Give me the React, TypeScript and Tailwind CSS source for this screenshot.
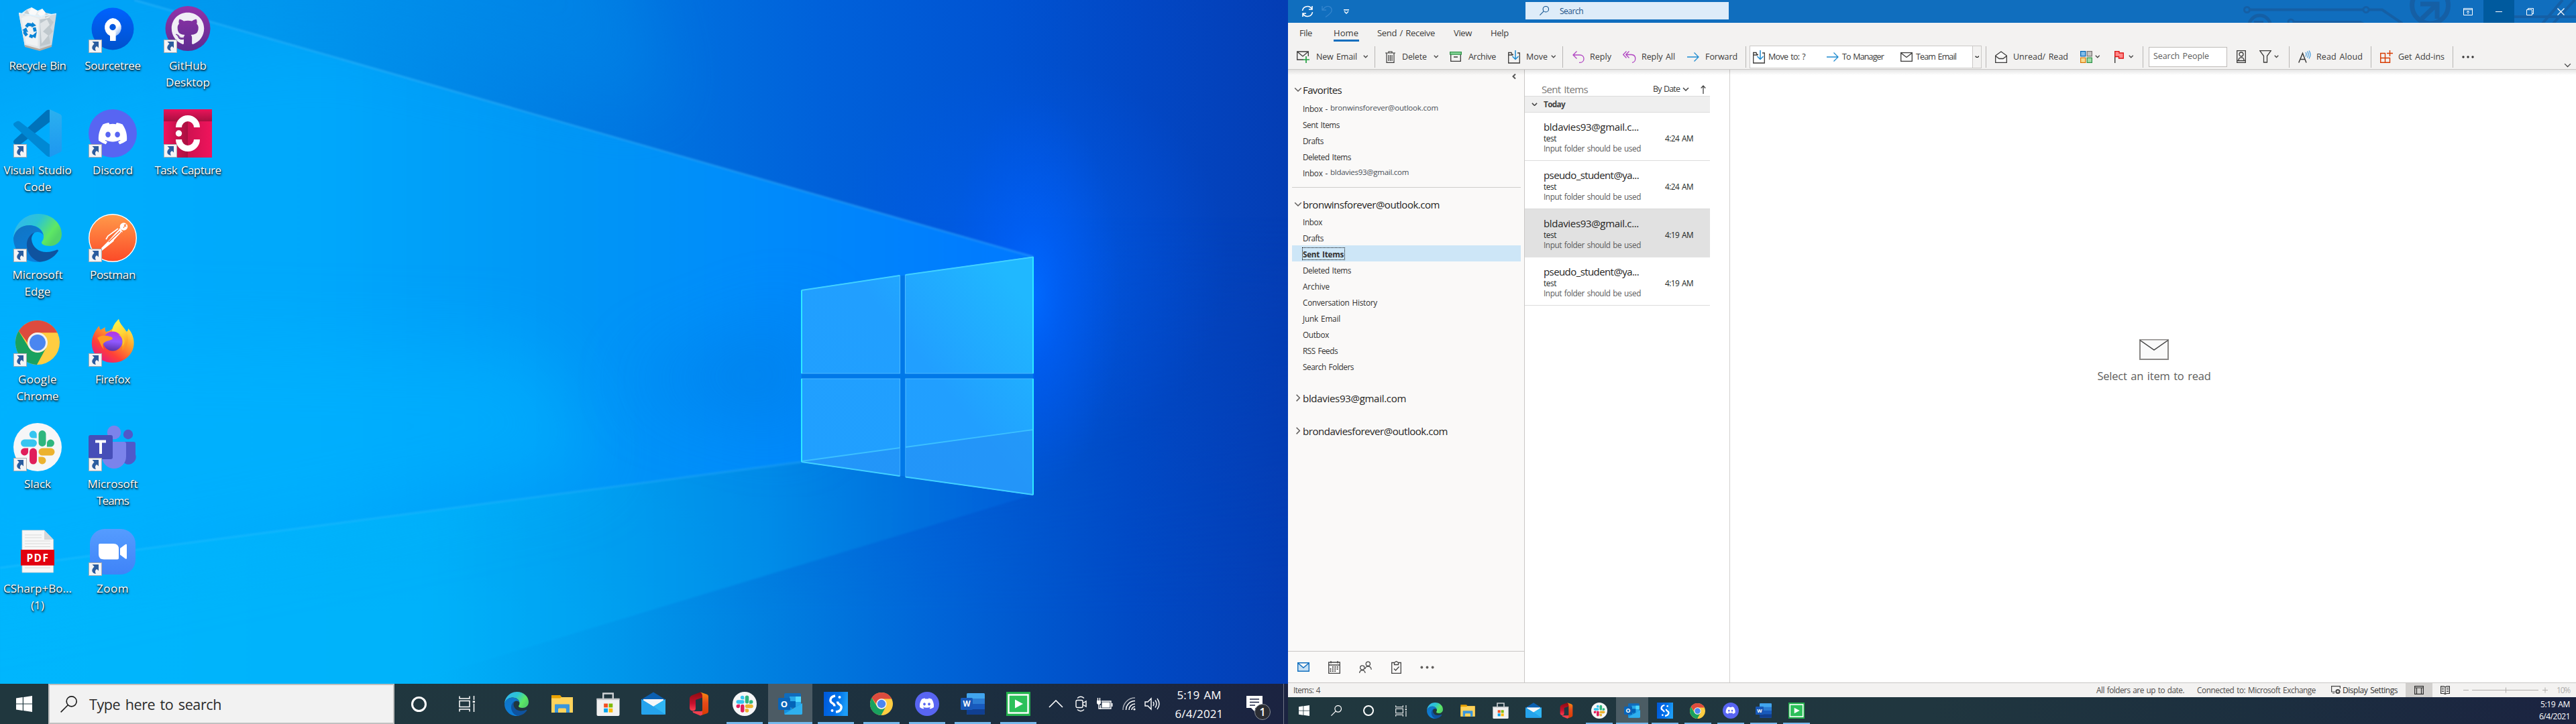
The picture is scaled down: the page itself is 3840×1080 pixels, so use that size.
import React, { useLayoutEffect, useRef, useState } from "react";
import { FaDiscord, FaGithub } from "react-icons/fa";

/* Single-line label whose tracking is adjusted so it spans `w` pixels. */
function Fit({ w, className = "", children }: { w: number; className?: string; children: string }) {
  const ref = useRef<HTMLSpanElement>(null);
  const [spacing, setSpacing] = useState(0);
  useLayoutEffect(() => {
    const el = ref.current;
    if (el) setSpacing((w - el.getBoundingClientRect().width) / Math.max(1, children.length));
  }, []);
  return (
    <span ref={ref} className={`inline-block shrink-0 whitespace-nowrap [word-spacing:0.1em] ${className}`} style={{ letterSpacing: `${spacing}px` }}>
      {children}
    </span>
  );
}

type IconProps = { s?: number };

/* ---------- App logos ---------- */

const RecycleBin = ({ s = 72 }: IconProps) => (
  <svg width={s} height={s} viewBox="0 0 72 72">
    <path d="M8 13 L39 17 L64 14 L57 62 L39 68 L17 62 Z" fill="#cfd8de" />
    <path d="M8 13 L39 17 L39 68 L17 62 Z" fill="#e4e8eb" />
    <path d="M12 20 L22 16 L38 20 L36 62 L19 58 Z" fill="#f1f3f4" />
    <path d="M40 22 L52 18 L60 26 L55 34 L59 40 L53 46 L55 58 L40 62 Z" fill="#bfc8cd" />
    <path d="M40 28 L50 22 L54 30 L44 40 L52 46 L42 58 Z" fill="#dfe4e7" />
    <path d="M13 12 L20 7 L27 4 L36 9 L43 6 L48 12 L57 14 L52 20 L40 22 L26 17 L14 18 Z" fill="#e9ecee" />
    <path d="M27 4 L36 9 L32 17 L22 14 Z M43 6 L48 12 L42 19 L36 13 Z" fill="#fafafa" />
    <path d="M20 7 L24 14 L14 16 Z M48 12 L55 16 L47 20 Z" fill="#c6cdd1" />
    <path d="M8 12.5 L39 17.5 L64 13.5" stroke="#dff3ff" strokeWidth="1.4" fill="none" />
    <path d="M17 60 L39 66 L57 60 L57 63 L39 69 L17 63 Z" fill="#b3aaa0" />
    <g fill="none" stroke="#0a84d6" strokeWidth="4.6">
      <path d="M19 33 L22 29.5 L29 30.5" />
      <path d="M31 34 L32.5 40" />
      <path d="M29 48 L24 46 M17.5 37 L17 42 L20 46" />
    </g>
    <path d="M28 26 L34 31 L27 34 Z M35 40 L33 50 L27 47 Z M13 38 L19 34 L22 41 Z" fill="#0a84d6" />
  </svg>
);

const Sourcetree = ({ s = 72 }: IconProps) => (
  <svg width={s} height={s} viewBox="0 0 72 72">
    <defs>
      <linearGradient id="stg" x1="0" y1="0" x2="0" y2="1"><stop offset="0" stopColor="#0062ff" /><stop offset="1" stopColor="#0052cc" /></linearGradient>
      <linearGradient id="stw" x1="0.3" y1="0" x2="1" y2="0.9"><stop offset="0.5" stopColor="#fff" /><stop offset="1" stopColor="#fff" stopOpacity="0.3" /></linearGradient>
    </defs>
    <circle cx="36" cy="36" r="31.5" fill="url(#stg)" />
    <path d="M36 20 a14 14 0 0 1 4.5 26.8 V54 h-8.500 V46.500 A14 14 0 0 1 36 20 Z" fill="url(#stw)" />
    <path d="M32 40 h8.500 v14 h-8.500 z" fill="#fff" />
    <circle cx="36" cy="33.500" r="4.700" fill="#0057e0" />
  </svg>
);

const GitHubDesktop = ({ s = 72 }: IconProps) => (
  <span className="relative flex size-[72px] items-center justify-center">
    <svg width={s} height={s} viewBox="0 0 72 72">
      <defs>
        <linearGradient id="ghg" x1="0" y1="0" x2="0" y2="1"><stop offset="0" stopColor="#9333a8" /><stop offset="1" stopColor="#5e2c91" /></linearGradient>
      </defs>
      <circle cx="36" cy="35.500" r="33.500" fill="url(#ghg)" />
    </svg>
    <FaGithub className="absolute left-[11px] top-[11px] size-[50px] text-[#f0eef5]" />
  </span>
);

const VsCode = ({ s = 72 }: IconProps) => (
  <svg width={s} height={s} viewBox="0 0 72 72">
    <defs><linearGradient id="vsr" x1="0" y1="0" x2="0" y2="1"><stop offset="0" stopColor="#2bb0ef" /><stop offset="1" stopColor="#1e97f0" /></linearGradient></defs>
    <path d="M1 46 Q-1 49 1 51 L5 54 Q7 55 9 53.500 L54 19 V1 Q52 0 49 2 Z" fill="#0072ba" />
    <path d="M1 25 Q-1 22 1 20.500 L5 18 Q7 17 9 18 L54 52.500 V71 Q52 71.500 49 69 Z" fill="#0088d4" />
    <path d="M54 0 L70 7.500 Q72 8.500 72 11 V61 Q72 63 70 64 L54 71.500 Z" fill="url(#vsr)" />
  </svg>
);

const DiscordLogo = ({ s = 72 }: IconProps) => (
  <span className="flex items-center justify-center rounded-full bg-[#5865f2]" style={{ width: s, height: s }}>
    <FaDiscord color="#fff" size={s * 0.64} />
  </span>
);

const TaskCapture = ({ s = 72 }: IconProps) => (
  <svg width={s} height={s} viewBox="0 0 72 72">
    <defs>
      <linearGradient id="tcg" x1="0" y1="0" x2="1" y2="0"><stop offset="0" stopColor="#f0145c" /><stop offset="0.5" stopColor="#a81040" /><stop offset="0.5" stopColor="#cf1150" /><stop offset="1" stopColor="#f0145c" /></linearGradient>
      <linearGradient id="tch" x1="0" y1="0" x2="0" y2="1"><stop offset="0" stopColor="#ea145a" /><stop offset="1" stopColor="#a80f40" /></linearGradient>
    </defs>
    <rect width="72" height="72" fill="url(#tcg)" />
    <rect width="72" height="18" fill="url(#tch)" />
    <path d="M22.500 27 A13.500 13.500 0 0 1 49.500 27 M22.500 45 A13.500 13.500 0 0 0 49.500 45" stroke="#fff" strokeWidth="9" fill="none" />
    <circle cx="22.500" cy="36" r="4.700" fill="#fff" />
  </svg>
);

const EdgeLogo = ({ s = 72 }: IconProps) => (
  <svg width={s} height={s} viewBox="0 0 72 72">
    <defs>
      <linearGradient id="eg1" x1="0" y1="0" x2="1" y2="0.500"><stop offset="0" stopColor="#33b4f5" /><stop offset="0.500" stopColor="#2cc4d4" /><stop offset="0.850" stopColor="#5ee864" /><stop offset="1" stopColor="#52d468" /></linearGradient>
      <linearGradient id="eg2" x1="0" y1="0" x2="0.500" y2="1"><stop offset="0" stopColor="#1173c2" /><stop offset="1" stopColor="#0b7fdc" /></linearGradient>
    </defs>
    <path d="M0 36 C1 14 18 0 37 0 C58 0 72 15 72 30 C72 42 63 48 54 48 C46 48 42 45 42 43 C42 41 45 40 45 34 C45 24 36 17 24 17 C11 17 3 26 0 36 Z" fill="url(#eg1)" />
    <path d="M0 36 C2 24 12 17 24 17 C36 17 45 26 45 34 C45 30 40 27 36 27 C28 27 22 36 22 46 C22 58 32 69 45 70.500 C42 71.500 39 72 36 72 C16 72 0 56 0 36 Z" fill="url(#eg2)" />
    <path d="M20 48 C19 38 25 30 32 27.500 C28 31 27 35 27 38 C28 50 38 57 49 57 C56 57 61 55 65 53.500 C66.500 53 67.500 54.500 66.500 56 C60 66 49 71.500 39 71.500 C28 69 21 59 20 48 Z" fill="#0f539f" />
  </svg>
);

const PostmanLogo = ({ s = 72 }: IconProps) => (
  <svg width={s} height={s} viewBox="0 0 72 72">
    <defs><linearGradient id="pmg" x1="0" y1="0" x2="0" y2="1"><stop offset="0" stopColor="#ff9a4a" /><stop offset="1" stopColor="#fc4a28" /></linearGradient></defs>
    <circle cx="36" cy="36" r="35.300" fill="url(#pmg)" stroke="#fff" strokeWidth="1.400" />
    <circle cx="52.500" cy="19" r="5.800" fill="#fff" />
    <path d="M53 16 l3 3 M52 21 l4 -6" stroke="#fb7a3c" strokeWidth="1.200" />
    <path d="M47 21 L51 27 L36 42 L20 55 L19 51 L31 39 Z" fill="#fff" />
    <path d="M45 23 L28 38 L26 37 M47 26 L30 42 M50 27 L38 40" stroke="#fb6a38" strokeWidth="1.300" fill="none" />
    <path d="M44 22 L29 33 L26 38" stroke="#fff" strokeWidth="1.800" fill="none" />
  </svg>
);

const ChromeLogo = ({ s = 72 }: IconProps) => (
  <svg width={s} height={s} viewBox="3 3 66 66">
    <circle cx="36" cy="36" r="33" fill="#ffcd41" />
    <path d="M36 3 A33 33 0 0 1 65.500 21.300 H36 A15 15 0 0 0 21 36 L7.900 18.700 A33 33 0 0 1 36 3 Z" fill="#dd4b3e" />
    <path d="M7.900 18.700 A33 33 0 0 0 35 69 L49 43.500 A15 15 0 0 1 23 43.500 Z" fill="#19a15f" />
    <circle cx="36" cy="36" r="15" fill="#f1f1f1" />
    <circle cx="36" cy="36" r="12" fill="#4a86f0" />
  </svg>
);

const FirefoxLogo = ({ s = 72 }: IconProps) => (
  <svg width={s} height={s} viewBox="0 0 72 72">
    <defs>
      <linearGradient id="ffg" x1="0.850" y1="0.100" x2="0.200" y2="1"><stop offset="0" stopColor="#fff44f" /><stop offset="0.350" stopColor="#ffa02c" /><stop offset="0.700" stopColor="#ff4038" /><stop offset="1" stopColor="#e31587" /></linearGradient>
      <linearGradient id="ffp" x1="0.500" y1="0" x2="0.400" y2="1"><stop offset="0" stopColor="#b833e1" /><stop offset="0.500" stopColor="#9059ff" /><stop offset="1" stopColor="#5b2fa8" /></linearGradient>
      <linearGradient id="ffy" x1="0.300" y1="0" x2="0.600" y2="1"><stop offset="0" stopColor="#fff44f" /><stop offset="0.500" stopColor="#ffd637" /><stop offset="1" stopColor="#ff8a1e" /></linearGradient>
    </defs>
    <path d="M5 40 C4 30 8 20 16 11 C16 14 17 16 18 17 C20 16 23 14 25 13 C24 16 25 18 26 20 C34 19 40 12 45 1 C46 8 52 12 56 19 C58 21 59 17 59 15 C65 21 68 30 67.500 38 C67 54 53 66 36 66 C20 66 6 55 5 40 Z" fill="url(#ffg)" />
    <path d="M35 20 C36 10 40 6 45 1 C46 9 55 14 58 25 C60 35 57 44 50 48 C52 36 48 26 35 20 Z" fill="url(#ffy)" />
    <circle cx="36" cy="34" r="14.500" fill="url(#ffp)" />
    <path d="M13 29 C18 25 24 25 28 26 C32 27 35 27 36 30 C34 33 28 33 25 35 C21 37 20 41 23 46 C18 42 17 34 13 29 Z" fill="#ff9a22" />
    <path d="M44 24 C50 27 53 34 50 42 C56 36 55 26 44 24 Z" fill="#ffc62e" />
  </svg>
);

const SlackLogo = ({ s = 72 }: IconProps) => (
  <svg width={s} height={s} viewBox="0 0 72 72">
    <circle cx="36" cy="36" r="36" fill="#f6f6f7" />
    <g transform="translate(36 36) scale(1.040) translate(-36 -36)">
      <path d="M29.500 12.500 a5.300 5.300 0 0 1 5.300 5.300 v5.300 h-5.300 a5.300 5.300 0 0 1 0 -10.600 Z" fill="#36c5f0" />
      <rect x="12" y="25" width="23" height="10.500" rx="5.250" fill="#36c5f0" />
      <rect x="37.500" y="12" width="10.500" height="23" rx="5.250" fill="#2eb67d" />
      <path d="M60 30.300 a5.300 5.300 0 0 1 -5.300 5.300 h-5.300 v-5.300 a5.300 5.300 0 0 1 10.600 0 Z" fill="#2eb67d" />
      <rect x="37.500" y="37.500" width="23" height="10.500" rx="5.250" fill="#ecb22e" />
      <path d="M42.700 60.500 a5.300 5.300 0 0 1 -5.300 -5.300 v-5.300 h5.300 a5.300 5.300 0 0 1 0 10.600 Z" fill="#ecb22e" />
      <rect x="24.500" y="37.500" width="10.500" height="23" rx="5.250" fill="#e01e5a" />
      <path d="M12 42.700 a5.300 5.300 0 0 1 5.300 -5.300 h5.300 v5.300 a5.300 5.300 0 0 1 -10.600 0 Z" fill="#e01e5a" />
    </g>
  </svg>
);

const TeamsLogo = ({ s = 72 }: IconProps) => (
  <svg width={s} height={s} viewBox="0 0 72 72">
    <circle cx="59" cy="17" r="7.200" fill="#5059c9" />
    <path d="M50 28 H67 Q70 28 70 31 V47 A11 11 0 0 1 50 56 Z" fill="#5059c9" />
    <circle cx="38" cy="14" r="10.300" fill="#7b83eb" />
    <path d="M20 28 H53 Q56 28 56 31 V50 A18 18 0 0 1 20 50 Z" fill="#7b83eb" />
    <rect x="0" y="18" width="36" height="36" rx="3" fill="#464eb8" />
    <path d="M10 27.500 H26 M18 27.500 V46" stroke="#fff" strokeWidth="4" />
  </svg>
);

const PdfFile = ({ s = 72 }: IconProps) => (
  <svg width={s} height={s} viewBox="0 0 72 72">
    <path d="M13 4 H46 L59.500 18 V67 H13 Z" fill="#f7f7f7" stroke="#d0d0d0" strokeWidth="0.800" />
    <path d="M46 4 L59.500 18 H46 Z" fill="#d4d6d8" />
    <path d="M17 11 H42 M17 15 H42 M17 20 H55 M17 24 H55 M17 28.500 H55 M17 60 H55" stroke="#d5d5d5" strokeWidth="0.900" />
    <rect x="11" y="33" width="50" height="23.500" fill="#e2000f" />
    <text x="36.500" y="50.500" fontFamily="Open Sans, sans-serif" fontWeight="700" fontSize="15.500" letterSpacing="1.500" textAnchor="middle" fill="#fff">PDF</text>
  </svg>
);

const ZoomLogo = ({ s = 72 }: IconProps) => (
  <svg width={s} height={s} viewBox="0 0 72 72">
    <defs><linearGradient id="zmg" x1="0" y1="0" x2="0" y2="1"><stop offset="0" stopColor="#559cff" /><stop offset="1" stopColor="#3f83f8" /></linearGradient></defs>
    <rect x="2" y="2" width="68" height="68" rx="22" fill="url(#zmg)" />
    <path d="M15 26 Q15 24 17 24 H37 Q45 24 45 32 V45.500 Q45 47.500 43 47.500 H23 Q15 47.500 15 40 Z" fill="#fff" />
    <path d="M47 31 L55 25 Q57 24 57 26 V45.500 Q57 47.500 55 46.500 L47 40.500 Z" fill="#fff" />
  </svg>
);

const Explorer = ({ s = 36 }: IconProps) => (
  <svg width={s} height={s} viewBox="0 0 36 36">
    <path d="M2 5 H15 L17.500 8 H34 V31 H2 Z" fill="#e9a100" />
    <path d="M2 9.500 H15 L17 8 H34 V31 H2 Z" fill="#ffd35c" />
    <path d="M7 19.500 Q7 18.500 8 18.500 H28 Q29 18.500 29 19.500 V31 H24 V26 Q24 24.500 22.500 24.500 H13.500 Q12 24.500 12 26 V31 H7 Z" fill="#3a96dd" />
  </svg>
);

const Store = ({ s = 36 }: IconProps) => (
  <svg width={s} height={s} viewBox="0 0 36 36">
    <path d="M10.500 10 V1.500 H25.500 V10" fill="none" stroke="#d0d3d6" strokeWidth="2.400" />
    <path d="M0.500 9.500 H35.500 V34 Q35.500 36 33.500 36 H2.500 Q0.500 36 0.500 34 Z" fill="#f1f1f1" />
    <rect x="0.500" y="9" width="35" height="2.500" fill="#c6c9cc" />
    <rect x="11.500" y="17" width="6" height="6" fill="#f25022" /><rect x="19" y="17" width="6" height="6" fill="#7fba00" />
    <rect x="11.500" y="24.500" width="6" height="6" fill="#00a4ef" /><rect x="19" y="24.500" width="6" height="6" fill="#ffb900" />
  </svg>
);

const MailApp = ({ s = 36 }: IconProps) => (
  <svg width={s} height={s} viewBox="0 0 36 36">
    <path d="M0 11.500 L18 0.500 L36 11.500 V14 H0 Z" fill="#0a5fb0" />
    <path d="M3 11 H33 V26 H3 Z" fill="#f4f6f8" />
    <path d="M0 11 L18 22 L36 11 V32 Q36 34 34 34 H2 Q0 34 0 32 Z" fill="#1a9be8" />
    <path d="M36 11 L18 22 L36 34 Z" fill="#30b6f4" />
    <path d="M0 11 L18 22 L35 34 H2 Q0 34 0 32 Z" fill="#25a3ec" />
  </svg>
);

const OfficeLogo = ({ s = 36 }: IconProps) => (
  <svg width={s} height={s} viewBox="0 0 36 36">
    <defs>
      <linearGradient id="ofg" x1="0" y1="0" x2="0" y2="1"><stop offset="0" stopColor="#f88a10" /><stop offset="0.450" stopColor="#e64a19" /><stop offset="1" stopColor="#d83b01" /></linearGradient>
      <linearGradient id="ofd" x1="0" y1="0" x2="0" y2="1"><stop offset="0" stopColor="#8a0d10" /><stop offset="0.600" stopColor="#c8102e" /><stop offset="1" stopColor="#ff4050" /></linearGradient>
    </defs>
    <path d="M20 0.500 L29 3.500 Q32 4.500 32 7 V29 Q32 31.500 29 32.500 L20 35.500 L10 30.500 Q20 31 23 28 V8 Z" fill="url(#ofg)" />
    <path d="M20 0.500 Q23 2 23 6 V8.500 L13 12 V25 Q13 28 9 28.500 Q4 28 4 24 V10 Q4 7 8 5 Z" fill="url(#ofd)" />
    <path d="M8.500 29 H23 V34 L20 35.500 L9 31 Z" fill="#ef4050" />
  </svg>
);

const OutlookLogo = ({ s = 36 }: IconProps) => (
  <svg width={s} height={s} viewBox="0 0 36 36">
    <rect x="9" y="2" width="25" height="22" rx="2" fill="#0f6cbd" />
    <rect x="17" y="7" width="17" height="16" fill="#28a8ea" />
    <rect x="26" y="7" width="8" height="8" fill="#50d9ff" /><rect x="17" y="14" width="9" height="9" fill="#0364b8" />
    <path d="M9 18 L22 25 L36 17 V32 Q36 34 34 34 H11 Q9 34 9 32 Z" fill="#1490df" />
    <path d="M36 17 L9 33 Q10 34 11 34 H34 Q36 34 36 32 Z" fill="#35b8f1" opacity="0.800" />
    <rect x="0" y="9" width="18" height="18" rx="1.500" fill="#0a64b8" />
    <text x="9" y="22.700" fontFamily="Open Sans, sans-serif" fontWeight="700" fontSize="13" textAnchor="middle" fill="#fff">O</text>
  </svg>
);

const StudioLogo = ({ s = 36 }: IconProps) => (
  <svg width={s} height={s} viewBox="0 0 36 36">
    <defs><linearGradient id="sug" x1="0" y1="0" x2="1" y2="0.200"><stop offset="0" stopColor="#0058d8" /><stop offset="0.600" stopColor="#0070ea" /><stop offset="1" stopColor="#1c9cf6" /></linearGradient></defs>
    <rect width="36" height="36" fill="url(#sug)" />
    <path d="M17 6 C9 7 8 14.500 13 17 C15.500 18.300 16 19.500 16 21.500" stroke="#fff" strokeWidth="3.400" fill="none" />
    <path d="M18 30 C27 29 28 21.500 23.500 19 C21 17.700 20.500 16.500 20.500 14.500" stroke="#fff" strokeWidth="3.400" fill="none" />
    <circle cx="23.500" cy="8" r="2" fill="#fff" /><circle cx="12.500" cy="28" r="2" fill="#fff" />
  </svg>
);

const WordLogo = ({ s = 36 }: IconProps) => (
  <svg width={s} height={s} viewBox="0 0 36 36">
    <rect x="9" y="2" width="27" height="32" rx="2" fill="#2b7cd3" />
    <path d="M9 4 Q9 2 11 2 H34 Q36 2 36 4 V10 H9 Z" fill="#41a5ee" />
    <rect x="9" y="18" width="27" height="8" fill="#185abd" />
    <path d="M9 26 H36 V32 Q36 34 34 34 H11 Q9 34 9 32 Z" fill="#103f91" />
    <rect x="0" y="9" width="18" height="18" rx="1.500" fill="#1858b8" />
    <text x="9" y="22.300" fontFamily="Open Sans, sans-serif" fontWeight="700" fontSize="11.500" textAnchor="middle" fill="#fff">W</text>
  </svg>
);

const RecorderLogo = ({ s = 36 }: IconProps) => (
  <svg width={s} height={s} viewBox="0 0 36 36">
    <rect width="36" height="36" fill="#22b14c" />
    <rect x="3.500" y="4.500" width="29" height="27" fill="#2cc05a" stroke="#fff" strokeWidth="2.400" />
    <path d="M13 11.500 L25 18 L13 24.500 Z" fill="#fff" />
  </svg>
);

const WindowsFlag = ({ s = 24 }: IconProps) => (
  <svg width={s} height={s} viewBox="0 0 24 24" fill="#fff">
    <path d="M0 3.400 L9.800 2.050 V11.500 H0 Z M11 1.900 L24 0 V11.500 H11 Z M0 12.600 H9.800 V22 L0 20.600 Z M11 12.600 H24 V24 L11 22.100 Z" />
  </svg>
);

const Lens = ({ s = 24, color = "#fff", w = 1.6 }: { s?: number; color?: string; w?: number }) => (
  <svg width={s} height={s} viewBox="0 0 24 24" fill="none" stroke={color} strokeWidth={w}>
    <circle cx="16" cy="8" r="7.200" /><path d="M10.800 13.200 L0.600 23.400" />
  </svg>
);

const TaskView = ({ s = 24 }: IconProps) => (
  <svg width={s} height={s} viewBox="0 0 24 24" fill="none" stroke="#fff" strokeWidth="1.500">
    <path d="M1 0.500 V4 H16 V0.500 M1 23.500 V20 H16 V23.500 M1 7.500 H16 V16.500 H1 Z M22.500 0 V6 M22.500 11.500 V24" />
    <rect x="20.700" y="7.500" width="3.300" height="2.600" fill="#fff" stroke="none" />
  </svg>
);

/* ---------- Wallpaper ---------- */

const Wallpaper = () => (
  <svg className="absolute inset-0" width="1920" height="1080" viewBox="0 0 1920 1080">
    <defs>
      <linearGradient id="wtop" x1="0" y1="0" x2="1" y2="0">
        <stop offset="0" stopColor="#00a5f6" /><stop offset="0.210" stopColor="#0099ef" /><stop offset="0.450" stopColor="#007ae2" />
        <stop offset="0.640" stopColor="#0061da" /><stop offset="0.780" stopColor="#0053d2" /><stop offset="0.890" stopColor="#0247c4" /><stop offset="1" stopColor="#043db4" />
      </linearGradient>
      <linearGradient id="wbot" x1="0" y1="0" x2="1" y2="0">
        <stop offset="0" stopColor="#00b4fb" /><stop offset="0.340" stopColor="#00b1f9" /><stop offset="0.470" stopColor="#0099ec" />
        <stop offset="0.600" stopColor="#007fe0" /><stop offset="0.730" stopColor="#0064d7" /><stop offset="0.880" stopColor="#004ac5" /><stop offset="1" stopColor="#043db4" />
      </linearGradient>
      <linearGradient id="wfade" x1="0" y1="0" x2="0" y2="1"><stop offset="0.300" stopColor="#000" /><stop offset="0.850" stopColor="#fff" /></linearGradient>
      <mask id="wmask"><rect width="1920" height="1080" fill="url(#wfade)" /></mask>
      <linearGradient id="wbeam" gradientUnits="userSpaceOnUse" x1="0" y1="0" x2="1540" y2="0">
        <stop offset="0" stopColor="#00aefd" /><stop offset="0.300" stopColor="#00a8fb" /><stop offset="0.550" stopColor="#0096f6" /><stop offset="0.720" stopColor="#008cfa" /><stop offset="1" stopColor="#0078ff" />
      </linearGradient>
      <linearGradient id="wlow" gradientUnits="userSpaceOnUse" x1="0" y1="0" x2="1540" y2="0">
        <stop offset="0" stopColor="#00b7fe" /><stop offset="0.400" stopColor="#00b3fb" /><stop offset="0.600" stopColor="#00a3f2" /><stop offset="0.740" stopColor="#0094ec" /><stop offset="0.850" stopColor="#007de2" /><stop offset="1" stopColor="#0060dc" />
      </linearGradient>
      <radialGradient id="wglow" gradientUnits="userSpaceOnUse" cx="0" cy="0" r="1" gradientTransform="translate(1540 440) scale(130 300)">
        <stop offset="0" stopColor="#006aff" stopOpacity="1" /><stop offset="0.350" stopColor="#0060fa" stopOpacity="0.600" /><stop offset="1" stopColor="#0058f0" stopOpacity="0" />
      </radialGradient>
      <radialGradient id="wglow2" gradientUnits="userSpaceOnUse" cx="1530" cy="390" r="300">
        <stop offset="0" stopColor="#0068ff" stopOpacity="0.550" /><stop offset="1" stopColor="#0058f0" stopOpacity="0" />
      </radialGradient>
      <linearGradient id="wpane" gradientUnits="userSpaceOnUse" x1="1195" y1="740" x2="1540" y2="460">
        <stop offset="0" stopColor="#20a0ff" /><stop offset="0.600" stopColor="#219fff" /><stop offset="1" stopColor="#20b8ff" />
      </linearGradient>
      <filter id="soft" x="-10%" y="-10%" width="120%" height="120%"><feGaussianBlur stdDeviation="1.500" /></filter>
      <filter id="wide" x="-40%" y="-60%" width="180%" height="220%"><feGaussianBlur stdDeviation="55" /></filter>
    </defs>
    <rect width="1920" height="1080" fill="url(#wtop)" />
    <rect width="1920" height="1080" fill="url(#wbot)" mask="url(#wmask)" />
    <rect x="1180" y="40" width="740" height="720" fill="url(#wglow2)" />
    <rect x="1300" y="100" width="600" height="700" fill="url(#wglow)" />
    <path d="M0 846 L1195 689 L1540 738 L700 992 L400 1080 H0 Z" fill="url(#wlow)" filter="url(#soft)" opacity="0.700" />
    <path d="M-60 -77 L200 0 L1540 383 V640 L1195 689 L0 847 L-60 860 Z" fill="url(#wbeam)" filter="url(#soft)" />
    <path d="M-100 -200 H900 L1000 170 L500 60 L200 90 L-100 200 Z" fill="#0092ec" opacity="0.350" filter="url(#wide)" />
    <path d="M-100 500 L800 520 L900 700 L-100 900 Z" fill="#00b4ff" opacity="0.600" filter="url(#wide)" />
    <path d="M940 570 L1200 470 V640 Z" fill="#0080e8" opacity="0.800" filter="url(#wide)" />
    <path d="M200 0 L1540 383" stroke="#4cc4ff" strokeWidth="2" opacity="0.500" filter="url(#soft)" />
    <path d="M0 847 L1195 689" stroke="#3cc8ff" strokeWidth="2" opacity="0.450" filter="url(#soft)" />
    <path d="M1195 433 L1540 383 V738 L1195 689 Z" fill="#0078e8" />
    <g fill="url(#wpane)" stroke="#4ab8ff" strokeWidth="1.200">
      <path d="M1195 433 L1341.500 411 V557 H1195 Z" />
      <path d="M1349.500 410 L1540 383.500 V557 H1349.500 Z" />
      <path d="M1195 565 H1341.500 V710 L1195 689 Z" />
      <path d="M1350 565 H1540 V738 L1350 711.500 Z" />
    </g>
    <path d="M1195 689 L1341.500 668 V710 Z M1350 667 L1540 641 V738 L1350 711.500 Z" fill="#2490f5" opacity="0.600" />
    <path d="M1195 688 L1341.500 668 M1350 667 L1540 641" stroke="#3cc0ff" strokeWidth="1.800" />
    <path d="M1195 433 V557 M1195 565 V689 M1540 383 V557 M1540 565 V738" stroke="#2eeaff" strokeWidth="2" />
    <path d="M1195 433 L1341 411 M1350 410 L1540 383.500 M1195 689 L1341 710 M1350 711.500 L1540 738" stroke="#40d0ff" strokeWidth="2" />
  </svg>
);

/* ---------- Desktop ---------- */

const ShortcutArrow = () => (
  <svg className="absolute bottom-0 left-0" width="20" height="20" viewBox="0 0 20 20">
    <rect x="0.500" y="0.500" width="19" height="19" fill="#f4f4f5" stroke="#a9adb2" />
    <path d="M5.500 3 H15 V12.500 L12.500 10 C9.500 11.500 9.500 14 11 17 C5 16 3 11.500 8.500 6.200 Z" fill="#2b5c9e" />
  </svg>
);

type App = { icon: React.FC<IconProps>; lines: [string, number][]; shortcut?: boolean };

const desktopColumns: App[][] = [
  [
    { icon: RecycleBin, lines: [["Recycle Bin", 85]], shortcut: false },
    { icon: VsCode, lines: [["Visual Studio", 101], ["Code", 41]] },
    { icon: EdgeLogo, lines: [["Microsoft", 75], ["Edge", 39]] },
    { icon: () => <span className="flex size-[72px] items-center justify-center"><ChromeLogo s={66} /></span>, lines: [["Google", 58], ["Chrome", 63]] },
    { icon: SlackLogo, lines: [["Slack", 40]] },
    { icon: PdfFile, lines: [["CSharp+Bo...", 102], ["(1)", 20]], shortcut: false },
  ],
  [
    { icon: Sourcetree, lines: [["Sourcetree", 83.5]] },
    { icon: DiscordLogo, lines: [["Discord", 60]] },
    { icon: PostmanLogo, lines: [["Postman", 68]] },
    { icon: FirefoxLogo, lines: [["Firefox", 52]] },
    { icon: TeamsLogo, lines: [["Microsoft", 75], ["Teams", 48]] },
    { icon: ZoomLogo, lines: [["Zoom", 48]] },
  ],
  [
    { icon: GitHubDesktop, lines: [["GitHub", 56], ["Desktop", 66]] },
    { icon: TaskCapture, lines: [["Task Capture", 99]] },
  ],
];

const DesktopIcon = ({ app }: { app: App }) => {
  const Icon = app.icon;
  return (
    <div className="flex h-[156px] w-28 flex-col items-center pt-[7px]">
      <div className="relative size-[72px]">
        <Icon s={72} />
        {app.shortcut !== false && <ShortcutArrow />}
      </div>
      <div className="mt-1.5 flex flex-col items-center text-[17px] leading-[25px] text-white [text-shadow:0_1px_2px_rgba(0,0,0,0.9),1px_2px_3px_rgba(0,0,0,0.7)]">
        {app.lines.map(([t, w]) => <Fit key={t} w={w}>{t}</Fit>)}
      </div>
    </div>
  );
};

/* ---------- Taskbars ---------- */

const pinned: { icon: React.FC<IconProps>; open?: boolean; active?: boolean }[] = [
  { icon: EdgeLogo }, { icon: Explorer }, { icon: Store }, { icon: MailApp }, { icon: OfficeLogo },
  { icon: SlackLogo, open: true }, { icon: OutlookLogo, open: true, active: true }, { icon: StudioLogo, open: true },
  { icon: ChromeLogo, open: true }, { icon: DiscordLogo, open: true }, { icon: WordLogo, open: true }, { icon: RecorderLogo, open: true },
];

const Pinned = ({ big }: { big: boolean }) => (
  <>
    {pinned.map(({ icon: Icon, open, active }, i) => (
      <div key={i} className={`flex h-full shrink-0 justify-center ${big ? "w-[68px]" : "w-[49px]"}`}>
        <div className={`relative flex h-full items-center justify-center ${active ? (big ? "w-[66px] bg-[#4c5b64]" : "w-12 bg-[#4b5c64]") : big ? "w-[54px]" : "w-10"}`}>
          <Icon s={big ? (Icon === ChromeLogo ? 34 : Icon === Store ? 35 : 36) : Icon === ChromeLogo ? 23 : 24} />
          {open && <span className={`absolute inset-x-0 bottom-0 bg-[#76b9ed] ${big ? "h-[3px]" : "h-0.5"}`} />}
        </div>
      </div>
    ))}
  </>
);

const Cell = ({ className, children }: { className: string; children: React.ReactNode }) => (
  <div className={`flex h-full shrink-0 items-center justify-center ${className}`}>{children}</div>
);

const MainTaskbar = () => (
  <div className="relative flex h-[60px] w-full items-center bg-[linear-gradient(90deg,#20373e_0%,#20363f_50%,#1c2f3f_75%,#1b2341_100%)] text-white">
    <Cell className="w-[72px]"><WindowsFlag s={24} /></Cell>
    <div className="flex h-full w-[516px] shrink-0 items-center border-2 border-[#c0c0c0] bg-[#f2f2f2] pl-[16px]">
      <Lens s={25} color="#1f1f1f" />
      <Fit w={197} className="ml-[18px] mt-0.5 text-[21.5px] text-[#2b2b2b]">Type here to search</Fit>
    </div>
    <Cell className="w-[72px]"><span className="size-[23px] rounded-full border-[3px] border-white" /></Cell>
    <Cell className="w-[72px]"><TaskView s={24} /></Cell>
    <div className="w-1 shrink-0" />
    <Pinned big />
    <Cell className="w-11">
      <svg width="22" height="12" viewBox="0 0 22 12" fill="none" stroke="#fff" strokeWidth="1.600"><path d="M1 11 L11 1 L21 11" /></svg>
    </Cell>
    <Cell className="w-[30px]">
      <svg width="17" height="24" viewBox="0 0 17 24" fill="none" stroke="#fff" strokeWidth="1.400"><rect x="1" y="6.500" width="10" height="11" rx="2" /><path d="M11 11 L16 8 V16 L11 13 M3 3.500 Q8 -1 13 3.500 M3 20.500 Q8 25 13 20.500" /></svg>
    </Cell>
    <Cell className="w-10">
      <svg width="25" height="18" viewBox="0 0 25 18" fill="none" stroke="#fff" strokeWidth="1.400"><path d="M8 5 H22 V16 H6.500 V11" /><path d="M8.500 6.500 H20.500 V14.500 H8.500 Z M23 8 h1.500 v5 h-1.500 z M1 4 h6 v3 q0 3 -3 3 q-3 0 -3 -3 z" fill="#fff" stroke="none" /><path d="M2.500 0 V4 M5.500 0 V4 M4 9 V16 H7" /></svg>
    </Cell>
    <Cell className="w-[34px]">
      <svg width="20" height="20" viewBox="0 0 20 20" fill="none" stroke="#fff" strokeWidth="1.500"><path d="M1 19 A18 18 0 0 1 19 1" opacity="0.600" /><path d="M5.500 19 A13.500 13.500 0 0 1 19 5.500 M10 19 A9 9 0 0 1 19 10 M14 19 A5 5 0 0 1 19 14" /><circle cx="18" cy="18" r="1.600" fill="#fff" stroke="none" /></svg>
    </Cell>
    <Cell className="w-9">
      <svg width="24" height="20" viewBox="0 0 24 20" fill="none" stroke="#fff" strokeWidth="1.400"><path d="M1 7 H5 L10 2 V18 L5 13 H1 Z M13 7 Q15 10 13 13 M16 4.500 Q20 10 16 15.500 M19 2 Q25 10 19 18" /></svg>
    </Cell>
    <div className="ml-0.5 flex h-full w-[99px] shrink-0 flex-col items-center pt-[3px] text-[17px] leading-7">
      <Fit w={66}>5:19 AM</Fit>
      <Fit w={72}>6/4/2021</Fit>
    </div>
    <div className="relative ml-[21px] size-6 shrink-0">
      <svg width="24" height="25" viewBox="0 0 24 25"><path d="M0 0 H24 V18 H13 L13 24 L7 18 H0 Z" fill="#fff" /><path d="M5 5 H19 M5 9.500 H19 M5 14 H13" stroke="#1b2341" strokeWidth="1.500" /></svg>
      <span className="absolute left-3 top-3 flex size-6 items-center justify-center rounded-full border border-[#8a8f98] bg-[#2b2d33] text-[16px] font-semibold">1</span>
    </div>
    <span className="absolute right-[6px] top-0 h-full w-px bg-[#6f7585]" />
  </div>
);

const SecondTaskbar = () => (
  <div className="relative flex h-10 w-full items-center bg-[linear-gradient(90deg,#20373e_0%,#20363f_50%,#1c2f3f_75%,#1b2341_100%)] text-white">
    <Cell className="w-12"><WindowsFlag s={16} /></Cell>
    <Cell className="w-12"><Lens s={16} w={1.8} /></Cell>
    <Cell className="w-12"><span className="size-4 rounded-full border-2 border-white" /></Cell>
    <Cell className="w-12"><TaskView s={17} /></Cell>
    <div className="w-0.5 shrink-0" />
    <Pinned big={false} />
    <div className="ml-auto mr-[9px] flex h-full flex-col items-end pt-0.5 text-[12px] leading-[18px]">
      <Fit w={44}>5:19 AM</Fit>
      <Fit w={46}>6/4/2021</Fit>
    </div>
  </div>
);

/* ---------- Mail window ---------- */

const Caret = ({ className = "", size = 8, color = "#444", w = 1.5 }: { className?: string; size?: number; color?: string; w?: number }) => (
  <svg className={`shrink-0 ${className}`} width={size} height={size * 0.6} viewBox="0 0 10 6" fill="none" stroke={color} strokeWidth={(w * 10) / size}><path d="M1 1 L5 5 L9 1" /></svg>
);

const svg18 = { width: 18, height: 18, viewBox: "0 0 18 18", fill: "none", stroke: "#3b3a39", strokeWidth: 1.3 } as const;

const FolderMove = () => (
  <svg width="18" height="20" viewBox="0 0 18 20" fill="none" stroke="#3b3a39" strokeWidth="1.300"><path d="M8 6.500 H6 L5 3.500 H0.700 V19 H17.300 V4 H14 M0.700 7 H7" /><path d="M11 0 V13.500 M6.500 9 L11 13.500 L15.500 9" stroke="#1e8bd0" strokeWidth="1.500" /></svg>
);
const ArrowRight = () => (<svg {...svg18} stroke="#1e8bd0"><path d="M0 9 H17 M10.500 2.500 L17 9 L10.500 15.500" /></svg>);
const Envelope = () => (<svg width="18" height="14" viewBox="0 0 18 14" fill="#fafafa" stroke="#3b3a39" strokeWidth="1.300"><path d="M0.700 0.700 H17.300 V13.300 H0.700 Z M0.700 1 L9 7.500 L17.300 1" /></svg>);

const Tool = ({ w, gap, icon, label, lw, caret, caretGap = 9 }: { w: string; gap: string; icon: React.ReactNode; label?: string; lw?: number; caret?: boolean; caretGap?: number }) => (
  <div className={`flex shrink-0 items-center ${w}`}>
    <span className={`flex shrink-0 items-center ${gap}`}>{icon}</span>
    {label && <Fit w={lw!} className="mt-px text-[12.5px] text-[#3b3a39]">{label}</Fit>}
    {caret && <span className="shrink-0" style={{ marginLeft: caretGap }}><Caret size={7.5} w={1.3} className="block" /></span>}
  </div>
);
const Rule = ({ className }: { className: string }) => <span className={`h-8 w-px shrink-0 bg-[#b8b6b4] ${className}`} />;

const TitleBar = () => (
  <div className="relative flex h-[34px] items-center bg-[#106ebe] pl-5">
    <svg className="absolute right-0 top-0" width="500" height="34" viewBox="0 0 500 34" fill="none" stroke="#155fa5" strokeWidth="4">
      <circle cx="9.500" cy="14.500" r="4" strokeWidth="3" /><path d="M14 14.500 H182" /><circle cx="187" cy="14.500" r="4" strokeWidth="3" /><path d="M191 14.500 H211 L241 35" />
      <circle cx="28.600" cy="39" r="16" strokeWidth="5" /><path d="M20 33 H34" /><circle cx="75" cy="33" r="4" strokeWidth="3" /><path d="M79 33 H178 L184 36" />
      <circle cx="282.600" cy="8" r="27" strokeWidth="7" /><path d="M268 6 H293 V28 M292 7 L270 28" strokeWidth="7" />
      <path d="M408 25 H500 M450 35 L480 0 M466 35 L498 0" />
    </svg>
    <svg width="18" height="18" viewBox="0 0 18 18" fill="none" stroke="#fff" strokeWidth="1.600"><path d="M1.500 8 A7.500 7.500 0 0 1 15.500 5.500 M16 1 V6 H11 M16.500 10 A7.500 7.500 0 0 1 2.500 12.500 M2 17 V12 H7" /></svg>
    <svg className="ml-3 shrink-0" width="17" height="18" viewBox="0 0 17 18" fill="none" stroke="#3585cd" strokeWidth="1.300"><path d="M1 1 V7 H7 M1 7 L5 3 C10 -1 16 3 15 8 C15 11 11 14 6 17.500" /></svg>
    <svg className="ml-4 shrink-0" width="8" height="7" viewBox="0 0 8 7" fill="none" stroke="#fff" strokeWidth="1.400"><path d="M0 0.800 H8 M1 3 L4 6 L7 3" /></svg>
    <div className="-mt-0.5 ml-[263px] flex h-[26px] w-[303px] items-center bg-[#deecf9] pl-[21px]">
      <Lens s={14} color="#1b5a94" w={2} />
      <Fit w={35} className="ml-4 mt-0.5 text-[12px] text-[#1b4f85]">Search</Fit>
    </div>
    <div className="relative ml-auto flex h-full">
      <Cell className="w-[46px]"><svg width="14" height="11" viewBox="0 0 14 11" fill="none" stroke="#fff"><path d="M0.500 0.500 H13.500 V10.500 H0.500 Z M0.500 2.500 H13.500 M7 9 V4.500 M4.800 6.500 L7 4.300 L9.200 6.500" /></svg></Cell>
      <Cell className="w-[46px] bg-[#005a9e]"><span className="h-px w-2.5 bg-white" /></Cell>
      <Cell className="w-[46px]"><svg width="11" height="11" viewBox="0 0 11 11" fill="none" stroke="#fff"><path d="M0.500 2.500 H8.500 V10.500 H0.500 Z M2.500 2.500 V0.500 H10.500 V8.500 H8.500" /></svg></Cell>
      <Cell className="w-[46px]"><svg width="11" height="11" viewBox="0 0 11 11" stroke="#fff" strokeWidth="1.200"><path d="M0.500 0.500 L10.500 10.500 M10.500 0.500 L0.500 10.500" /></svg></Cell>
    </div>
  </div>
);

const Tabs = () => (
  <div className="flex h-8 items-center pl-[17px] text-[13px] text-[#3b3a39]">
    <Fit w={19}>File</Fit>
    <span className="relative ml-8 flex h-full items-center">
      <Fit w={37}>Home</Fit>
      <span className="absolute bottom-1 left-0 h-[3px] w-[38px] bg-[#106ebe]" />
    </span>
    <Fit w={86} className="ml-7">Send / Receive</Fit>
    <Fit w={27} className="ml-7">View</Fit>
    <Fit w={27} className="ml-7">Help</Fit>
  </div>
);

const Ribbon = () => (
  <div className="relative flex h-[38px] items-center border-b border-[#c9c7c5] pl-[13px]">
    <Tool w="w-[116px]" gap="mr-2.5" label="New Email" lw={61} caret icon={
      <svg width="19" height="18" viewBox="0 0 19 18" fill="none" stroke="#3b3a39" strokeWidth="1.300"><path d="M10 13 H0.700 V1 H17.300 V8 M0.700 1 L9 8 L17.300 1" /><path d="M14 8 V18 M9 13 H19" stroke="#25a244" strokeWidth="1.700" /></svg>} />
    <Rule className="mr-[15px]" />
    <Tool w="w-[96px]" gap="mr-2.5" label="Delete" lw={37} caret caretGap={10} icon={
      <svg width="15" height="18" viewBox="0 0 15 18" fill="none" stroke="#3b3a39" strokeWidth="1.200"><path d="M0 3 H15 M5 3 V1 H10 V3 M2 3 V17.300 H13 V3 M5 6 V15 M7.500 6 V15 M10 6 V15" /></svg>} />
    <Tool w="w-[87px]" gap="mr-2.5" label="Archive" lw={41} icon={
      <svg width="18" height="15" viewBox="0 0 18 15" fill="none" stroke="#3b3a39" strokeWidth="1.300"><path d="M1.700 4 V14.300 H16.300 V4 M6 8 H12" /><path d="M0.600 0.700 H17.400 V4.200 H0.600 Z" fill="#8fdba0" stroke="#2f9247" /></svg>} />
    <Tool w="w-[81px]" gap="mr-[9px]" label="Move" lw={32} caret caretGap={5} icon={<FolderMove />} />
    <Rule className="mr-[14px]" />
    <Tool w="w-[75px]" gap="mr-2" label="Reply" lw={32} icon={
      <svg {...svg18} stroke="#b146c2"><path d="M6.500 0.500 L1 6 L6.500 11.500 M1 6 H11 C19 6 19 17.300 11 17.300 H10" /></svg>} />
    <Tool w="w-[96px]" gap="mr-2" label="Reply All" lw={50} icon={
      <svg width="20" height="18" viewBox="0 0 20 18" fill="none" stroke="#b146c2" strokeWidth="1.300"><path d="M5.500 0.500 L0.700 5.500 L5.500 10.500 M9.500 0.500 L4.700 5.500 L9.500 10.500 M4.700 5.500 H13 C21 6 20 17 14 17.300" /></svg>} />
    <Tool w="w-[87px]" gap="mr-[9px]" label="Forward" lw={48} icon={<ArrowRight />} />
    <Rule className="mr-[5px]" />
    <div className="flex h-[34px] w-[346px] shrink-0 items-center border border-[#cbc9c7] bg-white pl-1">
      <Tool w="w-[110px]" gap="mr-[5px]" label="Move to: ?" lw={55} icon={<FolderMove />} />
      <Tool w="w-[110px]" gap="mr-[5px]" label="To Manager" lw={62} icon={<ArrowRight />} />
      <Tool w="w-[107px]" gap="mr-[5px]" label="Team Email" lw={60} icon={<Envelope />} />
      <div className="flex h-full flex-1 items-center justify-center border-l border-[#cbc9c7] bg-[#f3f2f1]"><Caret size={6.5} w={1.4} color="#222" /></div>
    </div>
    <Rule className="ml-1.5 mr-[13px]" />
    <Tool w="w-[127px]" gap="mr-[9px]" label="Unread/ Read" lw={82} icon={
      <svg {...svg18}><path d="M0.700 7 L9 1 L17.300 7 V17.300 H0.700 Z M0.700 7.500 L6 11.500 H12 L17.300 7.500" fill="#fafafa" /></svg>} />
    <Tool w="w-[51px]" gap="mr-1" caret caretGap={0} icon={
      <svg width="18" height="18" viewBox="0 0 18 18"><rect x="0.600" y="0.600" width="7.200" height="7.200" fill="#83beec" stroke="#0063b1" strokeWidth="1.200" /><rect x="10.200" y="0.600" width="7.200" height="7.200" fill="#c8c6c4" stroke="#7a7574" strokeWidth="1.200" /><rect x="0.600" y="10.200" width="7.200" height="7.200" fill="#f8db8f" stroke="#d97706" strokeWidth="1.200" /><rect x="10.200" y="10.200" width="7.200" height="7.200" fill="#a1dca9" stroke="#2f9247" strokeWidth="1.200" /></svg>} />
    <Tool w="w-[42px]" gap="mr-[7px]" caret caretGap={0} icon={
      <svg width="14" height="18" viewBox="0 0 14 18"><path d="M0.700 0 V18" stroke="#3b3a39" strokeWidth="1.400" /><path d="M0.800 0.700 H7 V3 H13.300 V11 H6.500 V8.500 H0.800 Z" fill="#ff8a8a" stroke="#d11" strokeWidth="1.300" /></svg>} />
    <Rule className="mr-2" />
    <div className="flex h-[30px] w-[117px] shrink-0 items-center border border-[#bebbb8] bg-white pl-1.5"><Fit w={83} className="text-[12.5px] text-[#5c5c5c]">Search People</Fit></div>
    <svg className="ml-[14px] shrink-0" width="14" height="19" viewBox="0 0 14 19" fill="none" stroke="#3b3a39" strokeWidth="1.300"><path d="M0.700 0.700 H13.300 V18.300 H0.700 Z M0.700 15.500 H13.300 M3 15 C3 9.500 11 9.500 11 15" /><circle cx="7" cy="6" r="3" /></svg>
    <svg className="ml-5 shrink-0" width="18" height="19" viewBox="0 0 18 19" fill="none" stroke="#3b3a39" strokeWidth="1.300"><path d="M0.700 0.700 H17.300 L11.500 8.500 V18 H6.500 V8.500 L0.700 0.700 Z" /></svg>
    <Caret size={7} w={1.3} className="ml-1" />
    <Rule className="ml-[15px] mr-[13px]" />
    <Tool w="w-[108px]" gap="mr-2" label="Read Aloud" lw={69} icon={
      <svg width="19" height="19" viewBox="0 0 19 19" fill="none" stroke="#3b3a39" strokeWidth="1.500"><path d="M0.700 18.500 L6.500 4.500 L12 18.500 M3 13.500 H10" /><path d="M11 3 Q13 6 11 9.500 M13.500 1.500 Q16.500 6 13.500 11 M16 0.500 Q20 6 16 12.500" stroke="#3a96dd" strokeWidth="1.200" /></svg>} />
    <Rule className="mr-[13px]" />
    <Tool w="w-[108px]" gap="mr-2" label="Get Add-ins" lw={69} icon={
      <svg width="19" height="19" viewBox="0 0 19 19" fill="none" stroke="#d83b01" strokeWidth="1.400"><path d="M8 4.500 H0.700 V18.300 H14.500 V11.500 H0.700 M7.500 4.500 V18.300 M14.500 0 V9 M10 4.500 H19" /></svg>} />
    <Rule className="mr-[13px]" />
    <svg width="18" height="4" viewBox="0 0 18 4" fill="#333"><circle cx="2" cy="2" r="1.700" /><circle cx="9" cy="2" r="1.700" /><circle cx="16" cy="2" r="1.700" /></svg>
    <Caret size={11} w={1.3} className="absolute bottom-0.5 right-[7px]" />
  </div>
);

const FolderRow = ({ name, w, account, aw, selected }: { name: string; w: number; account?: string; aw?: number; selected?: boolean }) => (
  <div className={`mx-1.5 flex h-6 w-[341px] items-center pl-4 pt-px text-[11.75px] leading-6 text-[#323130] ${selected ? "bg-[#cde6f7]" : ""}`}>
    {selected ? (
      <span className="-ml-px flex h-[19px] items-center border border-dotted border-black pr-px"><Fit w={61} className="font-bold">{name}</Fit></span>
    ) : <Fit w={w}>{name}</Fit>}
    {account && <Fit w={aw!} className="-mt-px ml-1 text-[11.500px] text-[#484e56]">{account}</Fit>}
  </div>
);

const Heading = ({ label, w, open, className = "" }: { label: string; w: number; open?: boolean; className?: string }) => (
  <div className={`flex h-6 items-center pl-[9px] ${className}`}>
    <span className="flex w-[13px] shrink-0"><span className={open ? "" : "-rotate-90"}><Caret size={12} w={1.5} color="#605e5c" className="block" /></span></span>
    <Fit w={w} className="mt-px text-[15px] text-[#252423]">{label}</Fit>
  </div>
);

const folders: [string, number][] = [
  ["Inbox", 29], ["Drafts", 31], ["Sent Items", 61], ["Deleted Items", 72], ["Archive", 40], ["Conversation History", 111],
  ["Junk Email", 56], ["Outbox", 39], ["RSS Feeds", 52], ["Search Folders", 76],
];

const FolderPane = () => (
  <div className="flex h-full w-[353px] shrink-0 flex-col border-r border-[#c9c7c5] bg-[#faf9f8]">
    <div className="flex h-[18px] justify-end pr-3 pt-1.5">
      <svg width="6" height="8" viewBox="0 0 6 8" fill="none" stroke="#555" strokeWidth="2"><path d="M5 0.500 L1.500 4 L5 7.500" /></svg>
    </div>
    <Heading label="Favorites" w={58} open />
    <div className="pt-[3px]">
      <FolderRow name="Inbox -" w={37} account="bronwinsforever@outlook.com" aw={161} />
      <FolderRow name="Sent Items" w={55} />
      <FolderRow name="Drafts" w={31} />
      <FolderRow name="Deleted Items" w={72} />
      <FolderRow name="Inbox -" w={37} account="bldavies93@gmail.com" aw={117} />
    </div>
    <div className="mx-1.5 mt-2.5 w-[341px] border-t border-[#cfcdcb]" />
    <Heading label="bronwinsforever@outlook.com" w={204} open className="mt-[13px]" />
    <div className="pt-px">
      {folders.map(([n, w]) => <FolderRow key={n} name={n} w={w} selected={n === "Sent Items"} />)}
    </div>
    <Heading label="bldavies93@gmail.com" w={154} className="mt-6" />
    <Heading label="brondaviesforever@outlook.com" w={216} className="mt-[25px]" />
    <div className="mt-auto flex h-[47px] items-center border-t border-[#c9c7c5] pl-3.5">
      <svg width="18" height="14" viewBox="0 0 18 14" fill="#c7e0f4" stroke="#106ebe" strokeWidth="1.400"><path d="M0.700 0.700 H17.300 V13.300 H0.700 Z M0.700 1 L9 8 L17.300 1" /></svg>
      <svg className="ml-7" width="18" height="19" viewBox="0 0 18 19" fill="none" stroke="#444" strokeWidth="1.300"><path d="M0.700 2 H17.300 V18.300 H0.700 Z M0.700 6 H17.300 M4 0 V3.500 M14 0 V3.500" /><path d="M6 9 H16 M2.500 12 H16 M2.500 15 H11" strokeWidth="2" strokeDasharray="1.800 1.600" /></svg>
      <svg className="ml-7" width="19" height="19" viewBox="0 0 20 19" fill="none" stroke="#444" strokeWidth="1.300"><circle cx="14" cy="4" r="3.300" /><path d="M9.500 12 C9.500 7 18.500 6 19.200 13" /><circle cx="5" cy="10" r="3.300" /><path d="M0.700 18.500 C0.700 12.500 9.500 12.500 9.500 18.500" /></svg>
      <svg className="ml-[29px]" width="15" height="19" viewBox="0 0 15 19" fill="none" stroke="#444" strokeWidth="1.300"><path d="M4.500 2.500 H0.700 V18.300 H14.300 V2.500 H10.500 M4.500 5.500 V2.500 L7.500 0.500 L10.500 2.500 V5.500 Z M4 11.500 L6.500 14 L11.500 8.500" /></svg>
      <svg className="ml-7" width="21" height="5" viewBox="0 0 22 5" fill="#605e5c"><circle cx="2.500" cy="2.500" r="2" /><circle cx="11" cy="2.500" r="2" /><circle cx="19.500" cy="2.500" r="2" /></svg>
    </div>
  </div>
);

const messages = [
  { from: "bldavies93@gmail.c...", time: "4:24 AM" },
  { from: "pseudo_student@ya...", time: "4:24 AM" },
  { from: "bldavies93@gmail.c...", time: "4:19 AM", selected: true },
  { from: "pseudo_student@ya...", time: "4:19 AM" },
];

const MessageList = () => (
  <div className="h-full w-[306px] shrink-0 border-r border-[#d2d0ce] bg-white">
    <div className="flex h-[39px] items-center pl-[25px] pt-[19px]">
      <Fit w={69} className="text-[15px] text-[#7a7876]">Sent Items</Fit>
      <Fit w={40} className="ml-[97px] text-[12.5px] text-[#3b3a39]">By Date</Fit>
      <Caret size={10} w={1.5} className="ml-1" />
      <svg className="ml-[17px]" width="8" height="13" viewBox="0 0 8 13" fill="none" stroke="#444" strokeWidth="1.300"><path d="M4 13 V1 M0.700 4.500 L4 1 L7.300 4.500" /></svg>
    </div>
    <div className="flex h-[25px] w-[276px] items-center border-y border-[#dcdcdc] bg-[#efefef] pl-[10px]">
      <Caret size={9} w={1.5} />
      <Fit w={32} className="ml-[9px] text-[11.75px] font-bold text-[#444]">Today</Fit>
    </div>
    {messages.map((m, i) => (
      <div key={i} className={`flex h-[72px] w-[276px] flex-col border-b pl-[28px] pt-[11px] ${m.selected ? "border-[#e1e1e1] bg-[#e1e1e1]" : "border-[#dcdcdc]"}`}>
        <Fit w={142} className="self-start text-[15px] leading-5 text-[#252423]">{m.from}</Fit>
        <div className="flex justify-between pr-[25px] text-[11.75px] leading-[14px] text-[#201f1e]">
          <Fit w={19}>test</Fit>
          <Fit w={42}>{m.time}</Fit>
        </div>
        <Fit w={145} className="self-start text-[11.75px] leading-4 text-[#5c5c5c]">Input folder should be used</Fit>
      </div>
    ))}
  </div>
);

const StatusBar = () => (
  <div className="flex h-[22px] items-center border-t border-[#c9c7c5] bg-[#f3f2f1] pl-2 text-[11.75px] text-[#4f4d4b]">
    <Fit w={40}>Items: 4</Fit>
    <div className="ml-auto flex h-full w-[715px] shrink-0 items-center">
      <Fit w={131}>All folders are up to date.</Fit>
      <Fit w={177} className="ml-[19px]">Connected to: Microsoft Exchange</Fit>
      <svg className="ml-[23px] shrink-0" width="14" height="13" viewBox="0 0 14 13" fill="none" stroke="#444" strokeWidth="1.200"><path d="M6 9 H0.600 V0.600 H13.400 V4 M2 11 H5" /><circle cx="10" cy="8.500" r="2.600" strokeWidth="2" /></svg>
      <Fit w={82} className="ml-[3px] mt-px text-[12px] text-[#323130]">Display Settings</Fit>
      <Cell className="ml-3 w-10 bg-[#d2d0ce]"><svg width="14" height="13" viewBox="0 0 14 13" fill="none" stroke="#333" strokeWidth="1.200"><path d="M0.600 0.600 H13.400 V12.400 H0.600 Z M0.600 3 H13.400 M3.500 3 V12.400 M10.500 3 V12.400" /></svg></Cell>
      <svg className="ml-3 shrink-0" width="14" height="13" viewBox="0 0 14 13" fill="none" stroke="#333" strokeWidth="1.200"><path d="M7 2 L5 0.800 H0.600 V11.500 H5 L7 12.500 L9 11.500 H13.400 V0.800 H9 Z V12.500 M2 3.500 H5 M2 6 H5 M2 8.500 H5 M9 3.500 H12 M9 6 H12 M9 8.500 H12" /></svg>
      <svg className="ml-5 shrink-0" width="126" height="9" viewBox="0 0 126 9" stroke="#b0aeac" strokeWidth="1"><path d="M0 4.500 H8 M13 4.500 H112 M63.500 0.500 V8.500 M118 4.500 H126 M122 0.500 V8.500" /></svg>
      <Fit w={20} className="ml-[13px] text-[12px] text-[#b0aeac]">10%</Fit>
    </div>
  </div>
);

const MailWindow = () => (
  <div className="flex h-[1040px] flex-col bg-[#f3f2f1]">
    <TitleBar />
    <Tabs />
    <Ribbon />
    <div className="relative flex min-h-0 flex-1 bg-white">
      <FolderPane />
      <MessageList />
      <div className="flex flex-1 flex-col items-center pl-[3px] pt-[402px]">
        <svg width="44" height="31" viewBox="0 0 44 31" fill="#fafafa"><path d="M1 1 H43 V30 H1 Z" stroke="#8a8886" strokeWidth="2" /><path d="M1 1.500 L22 16 L43 1.500" stroke="#444" strokeWidth="1.500" /></svg>
        <Fit w={169} className="mt-3 text-[16.500px] leading-6 text-[#605e5c]">Select an item to read</Fit>
      </div>
      <div className="absolute inset-x-0 top-0 h-2 bg-linear-to-b from-black/10 to-transparent" />
    </div>
    <StatusBar />
  </div>
);

export default function App() {
  return (
    <div className="flex h-[1080px] w-[3840px] overflow-hidden font-['Open_Sans','Noto_Sans',sans-serif]">
      <div className="relative flex w-[1920px] flex-col overflow-hidden">
        <Wallpaper />
        <div className="relative flex h-[1020px]">
          {desktopColumns.map((col, i) => (
            <div key={i} className="flex flex-col">{col.map((a, j) => <DesktopIcon key={j} app={a} />)}</div>
          ))}
        </div>
        <MainTaskbar />
      </div>
      <div className="flex w-[1920px] flex-col">
        <MailWindow />
        <SecondTaskbar />
      </div>
    </div>
  );
}
